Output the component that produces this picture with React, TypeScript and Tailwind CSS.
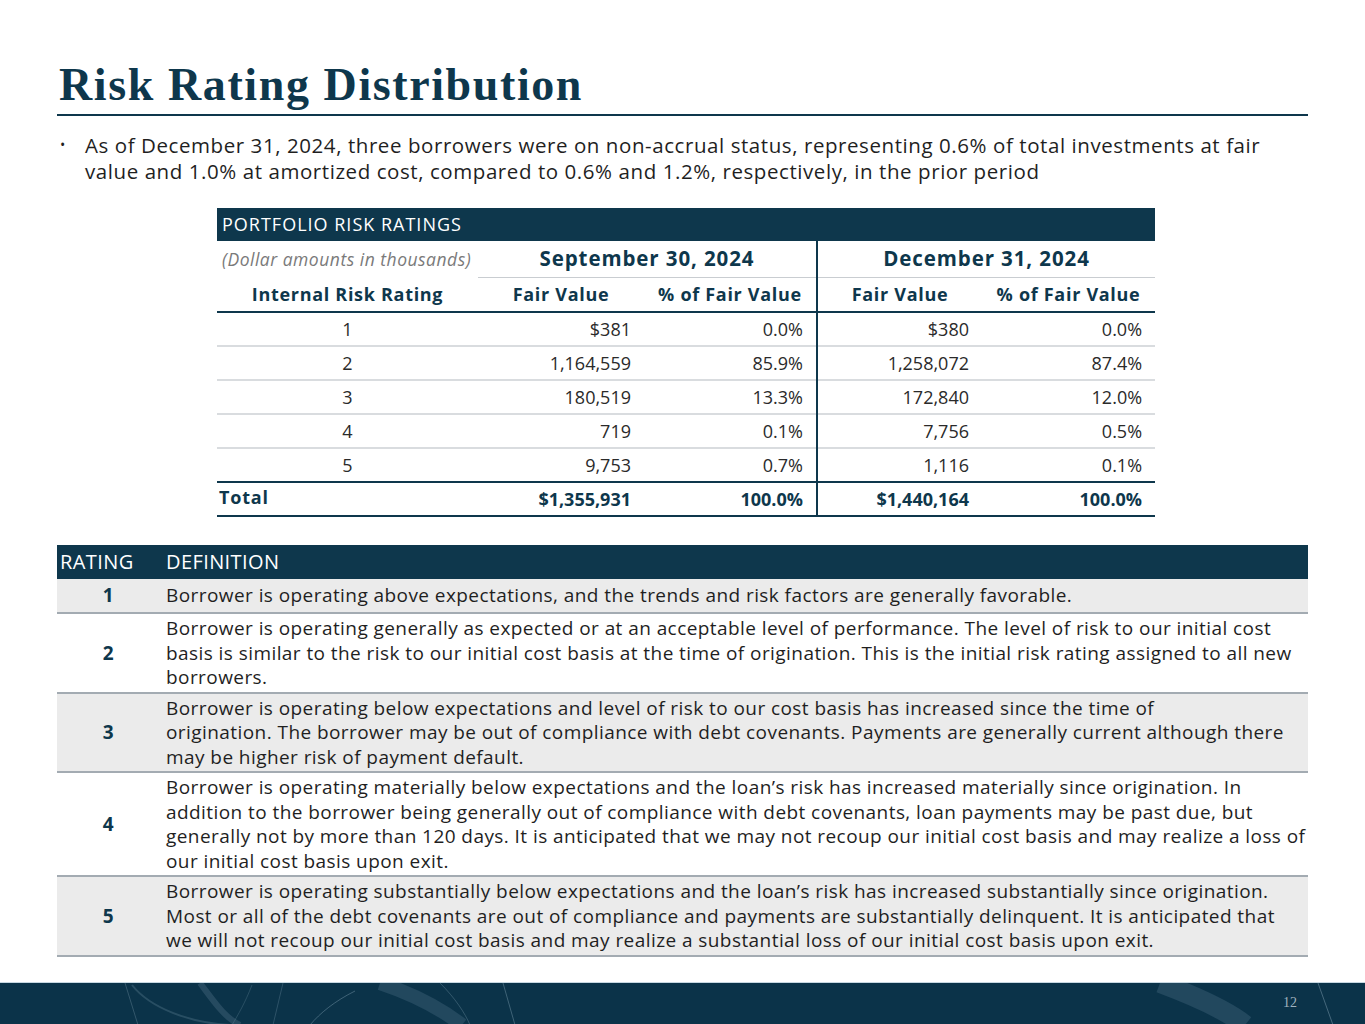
const rows = [
  { r: "1", fv1: "$381", p1: "0.0%", fv2: "$380", p2: "0.0%" },
  { r: "2", fv1: "1,164,559", p1: "85.9%", fv2: "1,258,072", p2: "87.4%" },
  { r: "3", fv1: "180,519", p1: "13.3%", fv2: "172,840", p2: "12.0%" },
  { r: "4", fv1: "719", p1: "0.1%", fv2: "7,756", p2: "0.5%" },
  { r: "5", fv1: "9,753", p1: "0.7%", fv2: "1,116", p2: "0.1%" },
];

const defs = [
  {
    r: "1",
    lines: ["Borrower is operating above expectations, and the trends and risk factors are generally favorable."],
  },
  {
    r: "2",
    lines: [
      "Borrower is operating generally as expected or at an acceptable level of performance. The level of risk to our initial cost",
      "basis is similar to the risk to our initial cost basis at the time of origination. This is the initial risk rating assigned to all new",
      "borrowers.",
    ],
  },
  {
    r: "3",
    lines: [
      "Borrower is operating below expectations and level of risk to our cost basis has increased since the time of",
      "origination. The borrower may be out of compliance with debt covenants. Payments are generally current although there",
      "may be higher risk of payment default.",
    ],
  },
  {
    r: "4",
    lines: [
      "Borrower is operating materially below expectations and the loan\u2019s risk has increased materially since origination. In",
      "addition to the borrower being generally out of compliance with debt covenants, loan payments may be past due, but",
      "generally not by more than 120 days. It is anticipated that we may not recoup our initial cost basis and may realize a loss of",
      "our initial cost basis upon exit.",
    ],
  },
  {
    r: "5",
    lines: [
      "Borrower is operating substantially below expectations and the loan\u2019s risk has increased substantially since origination.",
      "Most or all of the debt covenants are out of compliance and payments are substantially delinquent. It is anticipated that",
      "we will not recoup our initial cost basis and may realize a substantial loss of our initial cost basis upon exit.",
    ],
  },
];

function FooterArt() {
  return (
    <svg className="absolute inset-0" width="1365" height="42" viewBox="0 0 1365 42" fill="none">
      <path d="M125 0 L138 42" stroke="#5b7b8e" strokeOpacity="0.5" strokeWidth="1" />
      <path d="M132 2 C 150 25, 190 40, 230 42" stroke="#6d8da0" strokeOpacity="0.3" strokeWidth="2" />
      <path d="M200 0 C 215 20, 225 35, 240 42" stroke="#3f6277" strokeOpacity="0.5" strokeWidth="6" />
      <path d="M252 2 C 245 20, 238 32, 232 42" stroke="#6d8da0" strokeOpacity="0.3" strokeWidth="1" />
      <path d="M283 0 L273 42" stroke="#6d8da0" strokeOpacity="0.35" strokeWidth="1" />
      <path d="M355 8 C 335 18, 320 30, 310 42" stroke="#7f9db0" strokeOpacity="0.45" strokeWidth="1" />
      <path d="M380 0 C 410 10, 440 25, 462 42" stroke="#3f6277" strokeOpacity="0.45" strokeWidth="14" />
      <path d="M440 0 C 455 15, 465 30, 470 42" stroke="#7f9db0" strokeOpacity="0.35" strokeWidth="1" />
      <path d="M503 0 L515 42" stroke="#7f9db0" strokeOpacity="0.45" strokeWidth="1" />
      <path d="M1160 0 C 1200 15, 1230 30, 1245 42" stroke="#3f6277" strokeOpacity="0.45" strokeWidth="20" />
      <path d="M1318 0 L1333 42" stroke="#7f9db0" strokeOpacity="0.5" strokeWidth="1" />
    </svg>
  );
}

export default function App() {
  return (
    <div className="w-[1365px] h-[1024px] bg-white flex flex-col font-['Open_Sans',sans-serif] text-[#222]">
      <div className="mx-[57px] pt-[56px] border-b-2 border-[#0e374c]">
        <h1 className="pl-[2px] font-['Liberation_Serif',serif] font-bold text-[46px] leading-[58px] text-[#0e374c] tracking-[1.6px]">
          Risk Rating Distribution
        </h1>
      </div>

      <div className="flex mt-[16px] ml-[58px] text-[20.5px] leading-[26px] tracking-[0.57px] text-[#1f1f1f]">
        <span className="w-[27px] text-[14px] pl-[2px]">•</span>
        <p className="whitespace-nowrap">
          As of December 31, 2024, three borrowers were on non-accrual status, representing 0.6% of total investments at fair
          <br />
          value and 1.0% at amortized cost, compared to 0.6% and 1.2%, respectively, in the prior period
        </p>
      </div>

      <table className="mt-[24px] ml-[217px] w-[938px] table-fixed border-collapse text-[18px]">
        <colgroup>
          <col className="w-[261px]" />
          <col className="w-[166px]" />
          <col className="w-[173px]" />
          <col className="w-[165px]" />
          <col className="w-[173px]" />
        </colgroup>
        <thead>
          <tr className="h-[33px] bg-[#0e374c] text-white">
            <th colSpan={5} className="text-left font-normal pl-[5px] text-[18px] tracking-[1px]">
              PORTFOLIO RISK RATINGS
            </th>
          </tr>
          <tr className="h-[36px]">
            <th className="text-left font-normal italic text-[#7a7a7a] pl-[5px] text-[17.5px] tracking-[0.5px] whitespace-nowrap">
              (Dollar amounts in thousands)
            </th>
            <th colSpan={2} className="font-bold text-[20.5px] tracking-[0.9px] text-[#0e374c] border-b border-[#c9cdd1]">
              September 30, 2024
            </th>
            <th colSpan={2} className="font-bold text-[20.5px] tracking-[0.9px] text-[#0e374c] border-b border-[#c9cdd1] border-l-2 border-l-[#0e374c]">
              December 31, 2024
            </th>
          </tr>
          <tr className="h-[35px] border-b-2 border-[#0e374c] text-[#0e374c] text-[18px] tracking-[0.7px]">
            <th className="font-bold">Internal Risk Rating</th>
            <th className="font-bold">Fair Value</th>
            <th className="font-bold">% of Fair Value</th>
            <th className="font-bold border-l-2 border-l-[#0e374c]">Fair Value</th>
            <th className="font-bold">% of Fair Value</th>
          </tr>
        </thead>
        <tbody className="text-[#2a2a2a]">
          {rows.map((row, i) => (
            <tr key={row.r} className={i < rows.length - 1 ? "h-[34px] border-b-2 border-[#d9dcdf]" : "h-[34px]"}>
              <td className="text-center">{row.r}</td>
              <td className="text-right pr-[13px]">{row.fv1}</td>
              <td className="text-right pr-[13px]">{row.p1}</td>
              <td className="text-right pr-[13px] border-l-2 border-l-[#0e374c]">{row.fv2}</td>
              <td className="text-right pr-[13px]">{row.p2}</td>
            </tr>
          ))}
          <tr className="h-[34px] border-y-2 border-[#0e374c] font-bold text-[#0e374c]">
            <td className="text-left pl-[2px] align-top pt-[1px] tracking-[0.8px]">Total</td>
            <td className="text-right pr-[13px]">$1,355,931</td>
            <td className="text-right pr-[13px]">100.0%</td>
            <td className="text-right pr-[13px] border-l-2 border-l-[#0e374c]">$1,440,164</td>
            <td className="text-right pr-[13px]">100.0%</td>
          </tr>
        </tbody>
      </table>

      <div className="mt-[28px] ml-[57px] w-[1251px] text-[19px] tracking-[0.43px] text-[#1f1f1f]">
        <div className="flex h-[34px] items-center bg-[#0e374c] text-white text-[20px] tracking-[0.4px]">
          <div className="w-[103px] shrink-0 pl-[3px]">RATING</div>
          <div className="pl-[6px]">DEFINITION</div>
        </div>
        {defs.map((d, i) => (
          <div
            key={d.r}
            className={
              "flex items-center border-b-2 border-[#a3abb2] py-[2px] " +
              (i % 2 === 0 ? "bg-[#ebebeb] " : "bg-white ") +
              (i === 0 ? "min-h-[35px]" : "")
            }
          >
            <div className="w-[103px] shrink-0 text-center font-bold text-[#0e374c]">{d.r}</div>
            <div className="pl-[6px] leading-[24.5px] whitespace-nowrap">
              {d.lines.map((l, j) => (
                <div key={j}>{l}</div>
              ))}
            </div>
          </div>
        ))}
      </div>

      <div className="mt-auto relative h-[42px] bg-[#0b3349] border-t border-[#c7d8e2] overflow-hidden">
        <FooterArt />
        <span className="absolute left-[1283px] top-[9px] font-['Liberation_Serif',serif] text-[14px] text-[#9fb2bf]">12</span>
      </div>
    </div>
  );
}
